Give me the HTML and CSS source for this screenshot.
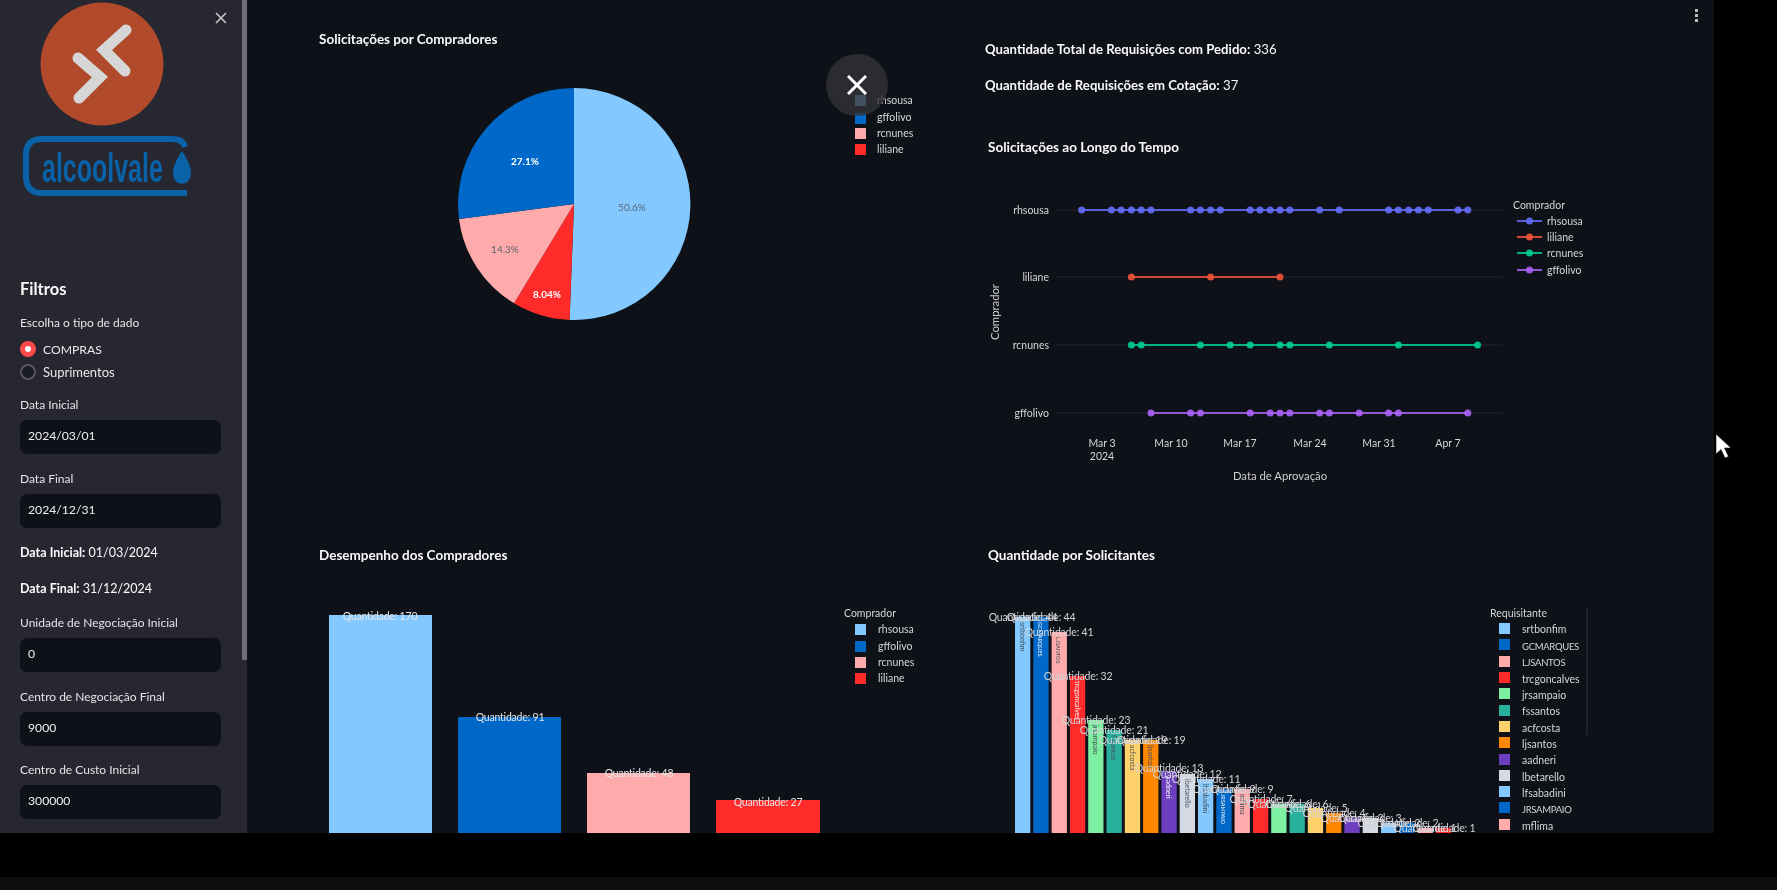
FILE: index.html
```html
<!DOCTYPE html>
<html lang="pt-BR">
<head>
  <meta charset="UTF-8">
  <title>Dashboard de Compras</title>
  <link rel="stylesheet" href="styles.css">
</head>
<body>
  <div class="screen">
    <aside class="sidebar">
      <div class="thumb"></div>
      <svg class="close-side" viewBox="0 0 12 12" width="12" height="12"><path d="M1 1l10 10M11 1L1 11"/></svg>
      <svg class="logo-rd" viewBox="40 0 124 126" width="124" height="126">
        <circle cx="102" cy="64" r="61.5" fill="#b04a2a"/>
        <path d="M126 30l-22 20 21 21M78 58l22 19-21 21" fill="none" stroke="#d6d6d6" stroke-width="11" stroke-linecap="round"/>
      </svg>
      <svg class="logo-av" viewBox="20 130 175 70" width="175" height="70">
        <path d="M185 147q-2-8-12-8H42q-16 0-16 16v21q0 17 16 17h145" fill="none" stroke="#0a63a8" stroke-width="6"/>
        <text transform="translate(42 182) scale(.61 1)" class="av-text">alcoolvale</text>
        <path d="M182 151q12 18 8 27a8.5 8.5 0 0 1-16 0q-4-9 8-27z" fill="#0a63a8"/>
      </svg>
      <h2 class="side-title">Filtros</h2>
      <div class="label first">Escolha o tipo de dado</div>
      <div class="radios">
        <div class="radio caps-row"><span class="dot on"></span>COMPRAS</div>
        <div class="radio"><span class="dot"></span>Suprimentos</div>
      </div>
      <div class="field"><div class="label">Data Inicial</div><div class="input">2024/03/01</div></div>
      <div class="field"><div class="label">Data Final</div><div class="input">2024/12/31</div></div>
      <p class="side-info"><b>Data Inicial:</b> 01/03/2024</p>
      <p class="side-info"><b>Data Final:</b> 31/12/2024</p>
      <div class="field"><div class="label">Unidade de Negociação Inicial</div><div class="input">0</div></div>
      <div class="field"><div class="label">Centro de Negociação Final</div><div class="input">9000</div></div>
      <div class="field"><div class="label">Centro de Custo Inicial</div><div class="input">300000</div></div>
    </aside>

    <main class="main">
      <div class="kebab"><i></i><i></i><i></i></div>

      <section class="cell">
        <h3 class="title top">Solicitações por Compradores</h3>
        <svg class="chart" viewBox="319 60 640 480" width="640" height="480">
          <path d="M574 88A116 116 0 1 1 569.6 319.9L574 204z" fill="#83c9ff"/>
          <path d="M569.6 319.9A116 116 0 0 1 514.1 303.3L574 204z" fill="#ff2b2b"/>
          <path d="M514.1 303.3A116 116 0 0 1 459 218.9L574 204z" fill="#ffabab"/>
          <path d="M459 218.9A116 116 0 0 1 574 88L574 204z" fill="#0068c9"/>
          <text x="632" y="211" class="pct dark">50.6%</text>
          <text x="525" y="165" class="pct light">27.1%</text>
          <text x="505" y="253" class="pct dark">14.3%</text>
          <text x="547" y="298" class="pct light">8.04%</text>
          <rect x="855" y="95" width="11" height="11" fill="#83c9ff"/>
          <rect x="855" y="113" width="11" height="11" fill="#0068c9"/>
          <rect x="855" y="128" width="11" height="11" fill="#ffabab"/>
          <rect x="855" y="144" width="11" height="11" fill="#ff2b2b"/>
          <text x="877" y="104" class="tick">rhsousa</text>
          <text x="877" y="121" class="tick">gffolivo</text>
          <text x="877" y="137" class="tick">rcnunes</text>
          <text x="877" y="153" class="tick">liliane</text>
        </svg>
      </section>

      <section class="cell">
        <p class="stat"><b>Quantidade Total de Requisições com Pedido:</b> 336</p>
        <p class="stat"><b>Quantidade de Requisições em Cotação:</b> 37</p>
        <h3 class="title inset">Solicitações ao Longo do Tempo</h3>
        <svg class="chart" viewBox="985 160 600 340" width="600" height="340">
          <path d="M1056 210H1503M1056 277H1503M1056 345H1503M1056 413H1503" stroke="#24272e" fill="none"/>
          <text x="1049" y="214" class="tick end">rhsousa</text>
          <text x="1049" y="281" class="tick end">liliane</text>
          <text x="1049" y="349" class="tick end">rcnunes</text>
          <text x="1049" y="417" class="tick end">gffolivo</text>
          <text class="axis mid" transform="translate(999 312) rotate(-90)">Comprador</text>

          <path d="M1081.6 210H1467.8" class="ln s1"/>
          <path d="M1081.6 210h0M1111.4 210h0M1121.2 210h0M1131.4 210h0M1141.2 210h0M1151 210h0M1190.6 210h0M1200.4 210h0M1210.6 210h0M1220.4 210h0M1250.2 210h0M1260 210h0M1270.2 210h0M1280 210h0M1289.8 210h0M1319.6 210h0M1339.2 210h0M1388.6 210h0M1398.4 210h0M1408.6 210h0M1418.4 210h0M1428.2 210h0M1458 210h0M1467.8 210h0" class="pts s1"/>
          <path d="M1131.4 277H1280" class="ln s2"/>
          <path d="M1131.4 277h0M1210.6 277h0M1280 277h0" class="pts s2"/>
          <path d="M1131.4 345H1477.6" class="ln s3"/>
          <path d="M1131.4 345h0M1141.2 345h0M1200.4 345h0M1230.2 345h0M1250.2 345h0M1280 345h0M1289.8 345h0M1329.4 345h0M1398.4 345h0M1477.6 345h0" class="pts s3"/>
          <path d="M1151 413H1467.8" class="ln s4"/>
          <path d="M1151 413h0M1190.6 413h0M1200.4 413h0M1250.2 413h0M1270.2 413h0M1280 413h0M1289.8 413h0M1319.6 413h0M1329.4 413h0M1359.2 413h0M1388.6 413h0M1398.4 413h0M1467.8 413h0" class="pts s4"/>

          <text x="1102" y="447" class="tick mid">Mar 3</text>
          <text x="1102" y="460" class="tick mid">2024</text>
          <text x="1171" y="447" class="tick mid">Mar 10</text>
          <text x="1240" y="447" class="tick mid">Mar 17</text>
          <text x="1310" y="447" class="tick mid">Mar 24</text>
          <text x="1379" y="447" class="tick mid">Mar 31</text>
          <text x="1448" y="447" class="tick mid">Apr 7</text>
          <text x="1280" y="480" class="axis mid">Data de Aprovação</text>

          <text x="1513" y="209" class="tick">Comprador</text>
          <path d="M1517 221h25" class="ln s1"/><path d="M1529.5 221h0" class="pts s1"/>
          <path d="M1517 237h25" class="ln s2"/><path d="M1529.5 237h0" class="pts s2"/>
          <path d="M1517 253h25" class="ln s3"/><path d="M1529.5 253h0" class="pts s3"/>
          <path d="M1517 270h25" class="ln s4"/><path d="M1529.5 270h0" class="pts s4"/>
          <text x="1547" y="225" class="tick">rhsousa</text>
          <text x="1547" y="241" class="tick">liliane</text>
          <text x="1547" y="257" class="tick">rcnunes</text>
          <text x="1547" y="274" class="tick">gffolivo</text>
        </svg>
      </section>

      <section class="cell">
        <h3 class="title">Desempenho dos Compradores</h3>
        <svg class="chart" viewBox="319 570 640 263" width="640" height="263">
          <rect x="329" y="615" width="103" height="218" fill="#83c9ff"/>
          <rect x="458" y="717" width="103" height="116" fill="#0068c9"/>
          <rect x="587" y="773" width="103" height="60" fill="#ffabab"/>
          <rect x="716" y="800" width="104" height="33" fill="#ff2b2b"/>
          <text x="380" y="620" class="bar-val">Quantidade: 170</text>
          <text x="510" y="721" class="bar-val">Quantidade: 91</text>
          <text x="639" y="777" class="bar-val">Quantidade: 48</text>
          <text x="768" y="806" class="bar-val">Quantidade: 27</text>
          <text x="844" y="617" class="tick">Comprador</text>
          <rect x="855" y="624" width="11" height="11" fill="#83c9ff"/>
          <rect x="855" y="641" width="11" height="11" fill="#0068c9"/>
          <rect x="855" y="657" width="11" height="11" fill="#ffabab"/>
          <rect x="855" y="673" width="11" height="11" fill="#ff2b2b"/>
          <text x="878" y="633" class="tick">rhsousa</text>
          <text x="878" y="650" class="tick">gffolivo</text>
          <text x="878" y="666" class="tick">rcnunes</text>
          <text x="878" y="682" class="tick">liliane</text>
        </svg>
      </section>

      <section class="cell">
        <h3 class="title inset">Quantidade por Solicitantes</h3>
        <svg class="chart" viewBox="985 570 620 263" width="620" height="263">
          <g class="req-bars">
            <rect x="1015" y="617" height="216" fill="#83c9ff"/>
            <rect x="1033.3" y="617" height="216" fill="#0068c9"/>
            <rect x="1051.6" y="632" height="201" fill="#ffabab"/>
            <rect x="1069.9" y="676" height="157" fill="#ff2b2b"/>
            <rect x="1088.2" y="720" height="113" fill="#7defa1"/>
            <rect x="1106.5" y="730" height="103" fill="#29b09d"/>
            <rect x="1124.8" y="740" height="93" fill="#ffd16a"/>
            <rect x="1143.1" y="740" height="93" fill="#ff8700"/>
            <rect x="1161.4" y="771" height="62" fill="#6d3fc0"/>
            <rect x="1179.7" y="774" height="59" fill="#d5dae5"/>
            <rect x="1198" y="779" height="54" fill="#83c9ff"/>
            <rect x="1216.3" y="789" height="44" fill="#0068c9"/>
            <rect x="1234.6" y="789" height="44" fill="#ffabab"/>
            <rect x="1252.9" y="799" height="34" fill="#ff2b2b"/>
            <rect x="1271.2" y="804" height="29" fill="#7defa1"/>
            <rect x="1289.5" y="804" height="29" fill="#29b09d"/>
            <rect x="1307.8" y="808" height="25" fill="#ffd16a"/>
            <rect x="1326.1" y="813" height="20" fill="#ff8700"/>
            <rect x="1344.4" y="818" height="15" fill="#6d3fc0"/>
            <rect x="1362.7" y="818" height="15" fill="#d5dae5"/>
            <rect x="1381" y="823" height="10" fill="#83c9ff"/>
            <rect x="1399.3" y="823" height="10" fill="#0068c9"/>
            <rect x="1417.6" y="828" height="5" fill="#ffabab"/>
            <rect x="1435.9" y="828" height="5" fill="#ff2b2b"/>
          </g>
          <g class="in-bar">
            <text transform="translate(1020 622) rotate(90)" class="ink">srtbonfim</text>
            <text transform="translate(1038 622) rotate(90)" class="pale tight">GCMARQUES</text>
            <text transform="translate(1056 637) rotate(90)" class="ink tight">LJSANTOS</text>
            <text transform="translate(1075 681) rotate(90)" class="pale">trcgoncalves</text>
            <text transform="translate(1093 725) rotate(90)" class="ink">jrsampaio</text>
            <text transform="translate(1111 735) rotate(90)" class="ink">fssantos</text>
            <text transform="translate(1130 745) rotate(90)" class="ink">acfcosta</text>
            <text transform="translate(1148 745) rotate(90)" class="ink">ljsantos</text>
            <text transform="translate(1166 776) rotate(90)" class="pale">aadneri</text>
            <text transform="translate(1185 779) rotate(90)" class="ink">lbetarello</text>
            <text transform="translate(1203 784) rotate(90)" class="ink">lfsabadini</text>
            <text transform="translate(1221 794) rotate(90)" class="pale tight">JRSAMPAIO</text>
            <text transform="translate(1240 794) rotate(90)" class="ink">mflima</text>
          </g>
          <g class="bar-vals">
            <text x="1023" y="621">Quantidade: 44</text>
            <text x="1041" y="621">Quantidade: 44</text>
            <text x="1059" y="636">Quantidade: 41</text>
            <text x="1078" y="680">Quantidade: 32</text>
            <text x="1096" y="724">Quantidade: 23</text>
            <text x="1114" y="734">Quantidade: 21</text>
            <text x="1133" y="744">Quantidade: 19</text>
            <text x="1151" y="744">Quantidade: 19</text>
            <text x="1169" y="772">Quantidade: 13</text>
            <text x="1187" y="778">Quantidade: 12</text>
            <text x="1206" y="783">Quantidade: 11</text>
            <text x="1224" y="793">Quantidade: 9</text>
            <text x="1242" y="793">Quantidade: 9</text>
            <text x="1261" y="803">Quantidade: 7</text>
            <text x="1279" y="808">Quantidade: 6</text>
            <text x="1297" y="808">Quantidade: 6</text>
            <text x="1316" y="812">Quantidade: 5</text>
            <text x="1334" y="817">Quantidade: 4</text>
            <text x="1352" y="822">Quantidade: 3</text>
            <text x="1370" y="822">Quantidade: 3</text>
            <text x="1389" y="827">Quantidade: 2</text>
            <text x="1407" y="827">Quantidade: 2</text>
            <text x="1425" y="832">Quantidade: 1</text>
            <text x="1444" y="832">Quantidade: 1</text>
          </g>
          <text x="1490" y="617" class="tick">Requisitante</text>
          <path d="M1587 608V735" stroke="#33363d" fill="none"/>
          <g class="req-keys">
            <rect x="1499" y="623" fill="#83c9ff"/>
            <rect x="1499" y="639" fill="#0068c9"/>
            <rect x="1499" y="656" fill="#ffabab"/>
            <rect x="1499" y="672" fill="#ff2b2b"/>
            <rect x="1499" y="688" fill="#7defa1"/>
            <rect x="1499" y="705" fill="#29b09d"/>
            <rect x="1499" y="721" fill="#ffd16a"/>
            <rect x="1499" y="737" fill="#ff8700"/>
            <rect x="1499" y="754" fill="#6d3fc0"/>
            <rect x="1499" y="770" fill="#d5dae5"/>
            <rect x="1499" y="786" fill="#83c9ff"/>
            <rect x="1499" y="802" fill="#0068c9"/>
            <rect x="1499" y="819" fill="#ffabab"/>
          </g>
          <text x="1522" y="633" class="tick">srtbonfim</text>
          <text x="1522" y="650" class="tick caps">GCMARQUES</text>
          <text x="1522" y="666" class="tick caps">LJSANTOS</text>
          <text x="1522" y="683" class="tick">trcgoncalves</text>
          <text x="1522" y="699" class="tick">jrsampaio</text>
          <text x="1522" y="715" class="tick">fssantos</text>
          <text x="1522" y="732" class="tick">acfcosta</text>
          <text x="1522" y="748" class="tick">ljsantos</text>
          <text x="1522" y="764" class="tick">aadneri</text>
          <text x="1522" y="781" class="tick">lbetarello</text>
          <text x="1522" y="797" class="tick">lfsabadini</text>
          <text x="1522" y="813" class="tick caps">JRSAMPAIO</text>
          <text x="1522" y="830" class="tick">mflima</text>
        </svg>
      </section>

      <div class="viewer-close">
        <svg viewBox="0 0 20 20" width="20" height="20"><path d="M1 1l18 18M19 1L1 19"/></svg>
      </div>
    </main>
  </div>
  <div class="strip"></div>
  <svg class="cursor" viewBox="0 0 16 26" width="16" height="26"><path d="M1 1v20l5-4.5 4 8.5 3.5-1.5-4-8.5 6.5 0z"/></svg>
</body>
</html>
```

FILE: styles.css
```css
body { margin:0; background:#000; color:#fafafa; font-family:"Lato", "Open Sans", sans-serif; width:1777px; height:890px; overflow:hidden; position:relative; }
.screen { display:flex; width:1714px; height:833px; overflow:hidden; filter:blur(0.7px); }
.strip { margin-top:44px; height:13px; background:#0f0f0f; }

/* sidebar */
.sidebar { width:247px; flex:none; box-sizing:border-box; padding:0 26px 0 20px; background:#262730; position:relative; overflow:hidden; }
.thumb { position:absolute; top:0; right:0; width:5px; height:660px; background:#6f7077; }
.close-side { position:absolute; left:215px; top:12px; fill:none; stroke:#c8c8c8; stroke-width:1.6; }
.logo-rd { display:block; margin-left:20px; }
.logo-av { display:block; margin-top:4px; }
.av-text { font-family:"Liberation Sans", sans-serif; font-weight:700; font-size:41px; fill:#0a63a8; }
.side-title { margin:78px 0 0; font-size:16.5px; line-height:22px; font-weight:700; }
.label { font-size:12px; line-height:16px; margin-bottom:7px; color:#e4e4e6; }
.label.first { margin:15px 0 0; }
.radios { margin:7px 0 14px; font-size:13px; }
.radio { display:flex; align-items:center; gap:7px; height:22px; margin-bottom:1px; color:#e8e8ea; }
.caps-row { font-size:12.2px; }
.dot { width:12px; height:12px; border-radius:50%; border:2px solid #55565c; background:#1b1d24; }
.dot.on { width:6px; height:6px; border:5px solid #ff4b4b; background:#fff; }
.field { margin-bottom:16.5px; }
.input { height:34px; box-sizing:border-box; padding-left:8px; line-height:32px; font-size:12.2px; background:#0e1117; border-radius:7px; color:#eee; }
.side-info { margin:1px 0 18px; font-size:12.5px; line-height:18px; }
.side-info + .side-info { margin-bottom:17px; }

/* main */
.main { flex:1; position:relative; background:#0e1117; padding-left:72px; display:grid; grid-template-columns:666px 1fr; grid-template-rows:546px 1fr; overflow:hidden; }
.cell { min-width:0; }
.title { margin:0 0 6px; font-size:13.5px; line-height:18px; font-weight:700; }
.title.top { padding-top:30px; margin-bottom:12px; }
.title.inset { margin-left:3px; }
.stat { margin:0 0 18px; font-size:13.15px; line-height:18px; }
.stat:first-child { margin-top:40px; }
.stat + .title { margin:44px 0 4px 3px; }
.stat + .stat { margin-bottom:0; }
.chart { display:block; }

.kebab { position:absolute; right:16px; top:9px; display:flex; flex-direction:column; gap:2px; }
.kebab i { width:3px; height:3px; background:#bbb; }
.viewer-close { position:absolute; left:579px; top:54px; width:62px; height:62px; border-radius:50%; background:rgba(50,51,56,0.8); display:flex; align-items:center; justify-content:center; }
.viewer-close svg { fill:none; stroke:#fff; stroke-width:3; }

/* chart text */
text { font-family:"Lato", "Open Sans", sans-serif; }
.tick { font-size:10.5px; fill:#d6d6d8; }
.tick.caps { font-size:9.5px; letter-spacing:-0.3px; }
.axis { font-size:11.3px; fill:#cfcfd2; }
.end { text-anchor:end; }
.mid { text-anchor:middle; }
.pct { font-size:10px; text-anchor:middle; }
.pct.dark { fill:#5a6470; }
.pct.light { fill:#fff; font-weight:700; }
.bar-val { font-size:10.5px; letter-spacing:-0.2px; text-anchor:middle; fill:#e6e6e8; }
.bar-vals text { font-size:10.5px; letter-spacing:-0.2px; text-anchor:middle; fill:#d4d4d8; }
.req-bars rect { width:15.3px; }
.req-keys rect { width:11px; height:11px; }
.in-bar text { font-size:7px; }
.in-bar .tight { font-size:5.5px; }
.ink { fill:#44535f; }
.pale { fill:#f2f2f2; }

.ln { fill:none; stroke-width:2; opacity:0.85; }
.pts { fill:none; stroke-width:7; stroke-linecap:round; opacity:0.9; }
.s1 { stroke:#636efa; }
.s2 { stroke:#ef553b; }
.s3 { stroke:#00cc96; }
.s4 { stroke:#ab63fa; }

.cursor { position:absolute; left:1715px; top:433px; fill:#fff; stroke:#111; stroke-width:0.6; }
```
